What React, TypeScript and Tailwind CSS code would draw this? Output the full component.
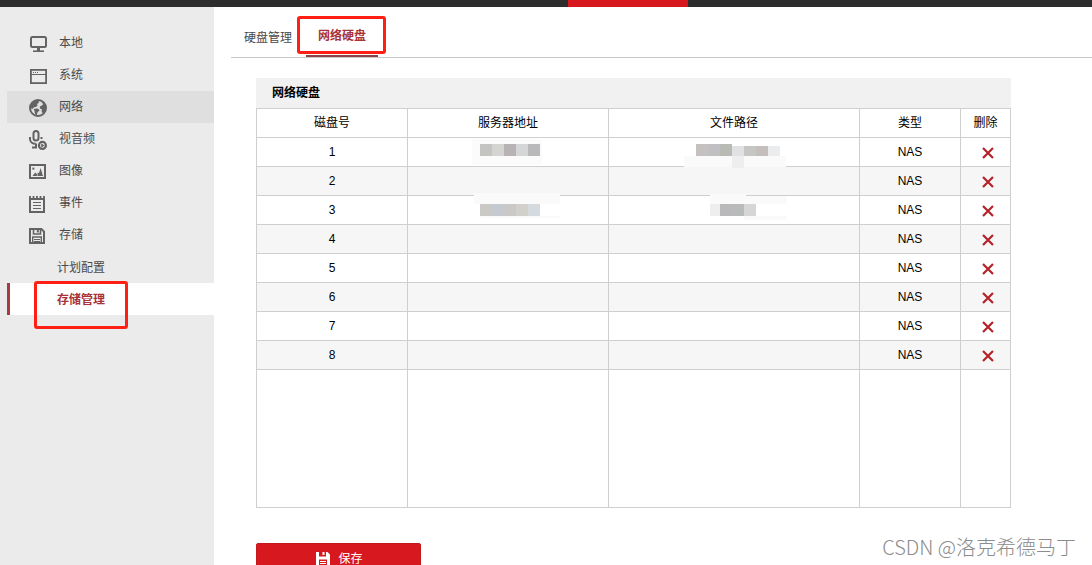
import React from 'react';

interface IconProps {
  className?: string;
}

interface MenuItem {
  label: string;
  icon: React.FC<IconProps>;
}

interface Block {
  x: number;
  y: number;
  w: number;
  h: number;
  fill: string;
}

interface Disk {
  id: number;
  type: string;
  server?: Block[];
  path?: Block[];
}

const MonitorIcon: React.FC<IconProps> = ({ className }) => (
  <svg viewBox="0 0 18 18" className={className} fill="none" stroke="currentColor" strokeWidth="2">
    <rect x="2" y="2" width="15" height="10" rx="1.5" />
    <path d="M9.5 12v4" strokeWidth="3" />
    <path d="M4 16.2h11" strokeWidth="1.6" />
  </svg>
);

const WindowIcon: React.FC<IconProps> = ({ className }) => (
  <svg viewBox="0 0 18 18" className={className} fill="none" stroke="currentColor">
    <rect x="1.9" y="2.9" width="15.2" height="13.2" strokeWidth="1.8" />
    <path d="M2 7.5h15" />
    <path d="M4 5.5h1M6 5.5h1M8 5.5h1" />
  </svg>
);

const GlobeIcon: React.FC<IconProps> = ({ className }) => (
  <svg viewBox="0 0 18 18" className={className} fill="currentColor">
    <circle cx="9" cy="9" r="8" fill="none" stroke="currentColor" strokeWidth="2" />
    <path d="M2 6.5C3 3 6.5 1 10 1.5L9.6 4 8 5l.6 1.4L6.8 8 5 8.2 3.4 10 1.5 9z" />
    <path d="M4.8 10l4-.6 1.8 1.8-2.2 2.2-.6 2.8-1.8-1.2-.4-2.6z" />
    <path d="M12.4 3l3.4 1.6 1.4 4-1 4-2.4 2-1.2-2.4.4-1.6-2-1-.2-2 2-1.2 1.4-1.2z" />
  </svg>
);

const MicIcon: React.FC<IconProps> = ({ className }) => (
  <svg viewBox="0 1 18 18" className={`overflow-visible ${className}`} fill="none" stroke="currentColor">
    <rect x="4.5" y="1" width="5" height="9.4" rx="2.5" strokeWidth="2" />
    <path d="M1 7v2c0 3 2.4 4.8 5.6 4.8M12.5 7v2M7 13.5v3.5M3 17.4h5" strokeWidth="2" />
    <circle cx="13.4" cy="15.4" r="3.5" strokeWidth="2.2" />
    <path d="M12.2 13.4l3.4 2-3.4 2z" fill="currentColor" stroke="none" />
  </svg>
);

const ImageIcon: React.FC<IconProps> = ({ className }) => (
  <svg viewBox="0 0 18 18" className={className} fill="currentColor">
    <rect x="1" y="2" width="15" height="13" fill="none" stroke="currentColor" strokeWidth="2" />
    <rect x="3.4" y="4.6" width="2" height="2" />
    <path d="M3.5 13l2.6-3.4 2 1.6v1.8zM8.6 13V9.6l1.4.4L11.6 5 14 13z" />
  </svg>
);

const EventIcon: React.FC<IconProps> = ({ className }) => (
  <svg viewBox="0 0 18 18" className={className} fill="none" stroke="currentColor">
    <path d="M1 4h14v13H1z" strokeWidth="2" />
    <path d="M1 1v3M4.5 1v3M8 1v3M11.5 1v3M15 1v3" strokeWidth="1.8" />
    <path d="M4 7.5h8M4 10.5h8M4 13.5h8" />
  </svg>
);

const SaveIcon: React.FC<IconProps> = ({ className }) => (
  <svg viewBox="0 0 18 18" className={className} fill="none" stroke="currentColor">
    <path d="M1 2h11.4L15 4.6V16H1z" strokeWidth="2" />
    <path d="M4.5 2v5h7V2" strokeWidth="1.6" />
    <path d="M8.8 2.5v3" strokeWidth="2" />
    <path d="M3.7 16v-6h8.6v6" strokeWidth="1.4" />
    <path d="M5 12.5h6M5 14.5h6" />
  </svg>
);

const SaveSolidIcon: React.FC<IconProps> = ({ className }) => (
  <svg viewBox="0 0 14 14" className={className} fill="currentColor" fillRule="evenodd">
    <path d="M0 0h3v4.5h7V0h1.5L14 2.5V14H0zM3 7.5V13h8V7.5z" />
    <path d="M6.5 0h2v3h-2zM4 9h6v1H4zM4 11h6v1H4z" />
  </svg>
);

const menu: MenuItem[] = [
  { label: '本地', icon: MonitorIcon },
  { label: '系统', icon: WindowIcon },
  { label: '网络', icon: GlobeIcon },
  { label: '视音频', icon: MicIcon },
  { label: '图像', icon: ImageIcon },
  { label: '事件', icon: EventIcon },
  { label: '存储', icon: SaveIcon },
];

const columns = ['磁盘号', '服务器地址', '文件路径', '类型', '删除'];

const disks: Disk[] = [
  {
    id: 1,
    type: 'NAS',
    server: [
      { x: 64, y: 1, w: 70, h: 26, fill: '#fbfbfb' },
      { x: 72, y: 6, w: 12, h: 12, fill: '#c4c4c2' },
      { x: 84, y: 6, w: 12, h: 12, fill: '#d4d4d2' },
      { x: 96, y: 6, w: 12, h: 12, fill: '#b7b2b4' },
      { x: 108, y: 6, w: 12, h: 12, fill: '#d4d6d8' },
      { x: 120, y: 6, w: 12, h: 12, fill: '#b9b9bb' },
    ],
    path: [
      { x: 75, y: 18, w: 102, h: 11, fill: '#fafafa' },
      { x: 87, y: 6, w: 12, h: 12, fill: '#c5c1c1' },
      { x: 99, y: 6, w: 12, h: 12, fill: '#c0c0c2' },
      { x: 111, y: 6, w: 12, h: 12, fill: '#b8bab4' },
      { x: 123, y: 8, w: 12, h: 10, fill: '#e1e1e3' },
      { x: 135, y: 8, w: 12, h: 10, fill: '#c5c7c5' },
      { x: 147, y: 8, w: 12, h: 10, fill: '#c4bfbc' },
      { x: 159, y: 8, w: 12, h: 10, fill: '#ebecee' },
      { x: 123, y: 18, w: 12, h: 12, fill: '#eeeeee' },
    ],
  },
  { id: 2, type: 'NAS' },
  {
    id: 3,
    type: 'NAS',
    server: [
      { x: 66, y: -3, w: 86, h: 11, fill: '#fafafa' },
      { x: 73, y: 20, w: 79, h: 2, fill: '#fafafa' },
      { x: 72, y: 8, w: 12, h: 12, fill: '#cbc9c5' },
      { x: 84, y: 8, w: 12, h: 12, fill: '#c5c9d0' },
      { x: 96, y: 8, w: 12, h: 12, fill: '#cac9c7' },
      { x: 108, y: 8, w: 12, h: 12, fill: '#d1d0cb' },
      { x: 120, y: 8, w: 12, h: 12, fill: '#d5dade' },
    ],
    path: [
      { x: 101, y: -2, w: 36, h: 10, fill: '#fafafa' },
      { x: 137, y: 0, w: 41, h: 8, fill: '#fafafa' },
      { x: 135, y: 20, w: 43, h: 4, fill: '#fafafa' },
      { x: 101, y: 8, w: 10, h: 12, fill: '#eeeeee' },
      { x: 111, y: 8, w: 12, h: 12, fill: '#b9b8ba' },
      { x: 123, y: 8, w: 12, h: 12, fill: '#b9bbba' },
      { x: 135, y: 8, w: 12, h: 12, fill: '#d6d6d6' },
    ],
  },
  { id: 4, type: 'NAS' },
  { id: 5, type: 'NAS' },
  { id: 6, type: 'NAS' },
  { id: 7, type: 'NAS' },
  { id: 8, type: 'NAS' },
];

const Blocks: React.FC<{ blocks: Block[]; className: string }> = ({ blocks, className }) => (
  <svg
    className={`absolute top-0 left-1/2 h-7 -translate-x-1/2 overflow-visible ${className}`}
    shapeRendering="crispEdges"
    aria-hidden="true"
  >
    {blocks.map((b, i) => (
      <rect key={i} x={b.x} y={b.y} width={b.w} height={b.h} fill={b.fill} />
    ))}
  </svg>
);

const Sidebar: React.FC = () => (
  <nav className="w-[214px] shrink-0 bg-[#ebebeb] pl-[7px] pt-5 text-[#4a4a4a]">
    {menu.map(({ label, icon: Icon }) => (
      <a
        key={label}
        href="#"
        className={`flex h-8 items-center gap-3 pl-[22px] ${label === '网络' ? 'bg-[#dfdfdf]' : ''}`}
      >
        <Icon className="mt-0.5 size-[18px] text-[#636363]" />
        <span>{label}</span>
      </a>
    ))}
    <a href="#" className="flex h-8 items-center pt-0.5 pl-[50px]">计划配置</a>
    <a href="#" className="relative flex h-8 items-center border-l-3 border-[#a63a40] bg-white pt-0.5 pl-[47px] font-bold text-[#a8323a]">
      存储管理
      <span className="absolute -top-[2px] left-6 h-12 w-[94px] rounded-[3px] border-3 border-[#ff1f14]"></span>
    </a>
  </nav>
);

const Tabs: React.FC = () => (
  <div className="ml-[17px] flex h-[51px] items-end gap-0.5 border-b border-[#c8c8c8] pl-px">
    <button type="button" className="h-10 px-3 pt-0.5 text-[#4a4a4a]">硬盘管理</button>
    <button type="button" className="relative h-11 border-b-2 border-[#8c4146] px-3 pt-1 font-bold text-[#a8323a]">
      网络硬盘
      <span className="absolute top-[3px] -left-[9px] h-[38px] w-[89px] rounded-[3px] border-3 border-[#ff1f14]"></span>
    </button>
  </div>
);

const DiskTable: React.FC = () => (
  <section className="w-full max-w-[755px]">
    <h2 className="flex h-[30px] items-center bg-[#f1f1f1] pl-4 font-bold text-black">网络硬盘</h2>
    <table className="w-full table-fixed border-separate border-spacing-0 border-t border-l border-[#cfcfcf] text-center text-black">
      <colgroup>
        <col className="w-[151px]" />
        <col className="w-[201px]" />
        <col className="w-[251px]" />
        <col className="w-[101px]" />
        <col className="w-[50px]" />
      </colgroup>
      <thead>
        <tr className="h-[29px]">
          {columns.map((c) => (
            <th key={c} scope="col" className="border-r border-b border-[#cfcfcf] p-0 font-normal">{c}</th>
          ))}
        </tr>
      </thead>
      <tbody>
        {disks.map((d) => (
          <tr key={d.id} className="h-[29px] even:bg-[#f6f6f6]">
            <td className="border-r border-b border-[#cfcfcf] p-0">{d.id}</td>
            <td className="relative border-r border-b border-[#cfcfcf] p-0">
              {d.server && <Blocks blocks={d.server} className="w-[200px]" />}
            </td>
            <td className="relative border-r border-b border-[#cfcfcf] p-0">
              {d.path && <Blocks blocks={d.path} className="w-[250px]" />}
            </td>
            <td className="border-r border-b border-[#cfcfcf] p-0">{d.type}</td>
            <td className="border-r border-b border-[#cfcfcf] p-0">
              <button type="button" aria-label={`删除 ${d.id}`} className="block w-full pt-px pl-1">
                <svg viewBox="0 0 12 12" className="mx-auto size-3 text-[#b5222a]" stroke="currentColor" strokeWidth="2.2">
                  <path d="M1 1l10 10M11 1L1 11" />
                </svg>
              </button>
            </td>
          </tr>
        ))}
        {/* empty rest of the grid */}
        <tr className="h-[138px]">
          {columns.map((c) => (
            <td key={c} className="border-r border-b border-[#cfcfcf] p-0"></td>
          ))}
        </tr>
      </tbody>
    </table>
  </section>
);

const App: React.FC = () => {
  return (
    <div className="relative flex h-screen flex-col overflow-hidden bg-white font-['Liberation_Sans','Noto_Sans_CJK_SC',sans-serif] text-xs">
      <header className="flex h-[7px] shrink-0 bg-[#2d2d2d]">
        <div className="ml-[52%] w-[120px] bg-[#d7191f]"></div>
      </header>

      <div className="flex min-h-0 flex-1">
        <Sidebar />
        <main className="min-w-0 flex-1">
          <Tabs />
          <div className="pt-5 pr-5 pl-[42px]">
            <DiskTable />
            <button
              type="button"
              className="mt-[35px] flex h-8 w-[165px] items-center justify-center gap-2 rounded-[2px] border border-[#c2181e] bg-[#d7191f] pl-0.5 text-white"
            >
              <SaveSolidIcon className="size-3.5" />
              保存
            </button>
          </div>
        </main>
      </div>

      <div className="absolute right-4 bottom-1 font-['Noto_Sans_CJK_SC',sans-serif] text-xl font-light text-[#8c8c8c]">
        CSDN @洛克希德马丁
      </div>
    </div>
  );
};

export default App;
